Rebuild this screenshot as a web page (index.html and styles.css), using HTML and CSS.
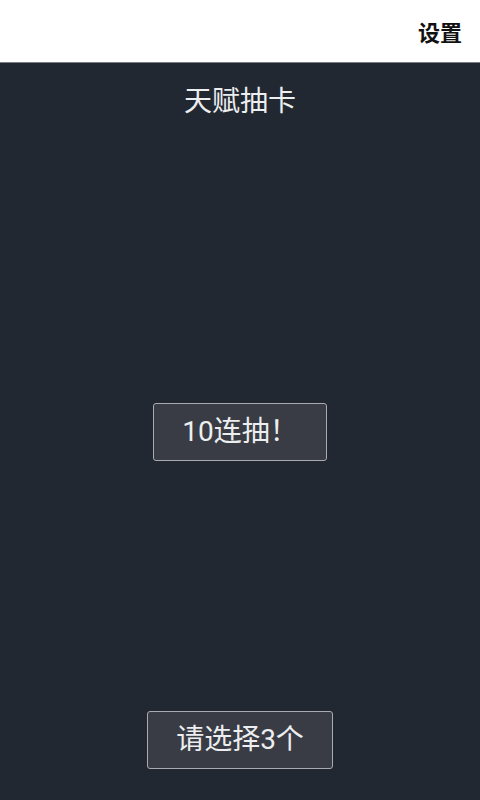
FILE: index.html
```html
<!DOCTYPE html>
<html lang="zh">
<head>
<meta charset="utf-8">
<link rel="stylesheet" href="styles.css">
</head>
<body>
<header class="topbar">
  <span class="settings">设置</span>
</header>
<main class="stage">
  <h1 class="title">天赋抽卡</h1>
  <button class="btn btn-draw">10连抽！</button>
  <button class="btn btn-pick">请选择3个</button>
</main>
</body>
</html>
```

FILE: styles.css
```css
html, body {
  margin: 0;
  padding: 0;
  height: 800px;
  overflow: hidden;
  font-family: Roboto, "Noto Sans CJK SC", sans-serif;
}
body {
  background: #222831;
  display: flex;
  flex-direction: column;
}
.topbar {
  height: 62px;
  background: #ffffff;
  border-bottom: 1px solid #7a7d82;
  display: flex;
  align-items: center;
  justify-content: flex-end;
  padding-right: 18px;
}
.settings {
  font-family: "Noto Sans CJK SC", sans-serif;
  font-size: 22px;
  font-weight: 700;
  color: #111;
  line-height: 1;
}
.stage {
  display: flex;
  flex-direction: column;
  align-items: center;
}
.title {
  margin: 19px 0 0;
  font-size: 28px;
  font-weight: 400;
  line-height: 40px;
  color: #eceef0;
}
.btn {
  font-family: Roboto, "Noto Sans CJK SC", sans-serif;
  font-size: 28px;
  color: #eceef0;
  background: #393c44;
  border: 1px solid #a9abb0;
  border-radius: 3px;
  height: 58px;
  padding: 0;
  line-height: 1;
  text-align: center;
}
.btn-draw {
  margin-top: 281px;
  width: 174px;
}
.btn-pick {
  margin-top: 250px;
  width: 186px;
}
```
